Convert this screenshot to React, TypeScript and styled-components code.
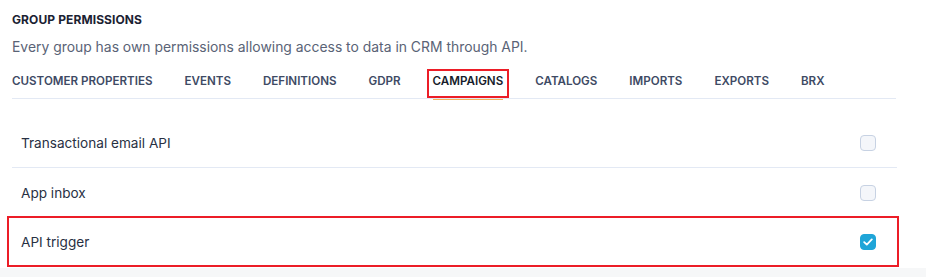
import React from 'react'
import styled, { createGlobalStyle } from 'styled-components'

const GlobalStyle = createGlobalStyle`
    html, body {
        margin: 0;
        padding: 0;
        background: #ffffff;
    }
    body {
        font-family: Inter, 'Noto Sans', sans-serif;
        -webkit-font-smoothing: antialiased;
    }
`

const Page = styled.div`
    width: 926px;
    height: 277px;
    overflow: hidden;
    display: flex;
    flex-direction: column;
    background: #ffffff;
`

const Content = styled.div`
    padding: 12px 30px 0 12px;
    display: flex;
    flex-direction: column;
`

const Title = styled.h4`
    margin: 0;
    font-size: 12px;
    line-height: 16px;
    font-weight: 700;
    color: #1b2232;
    letter-spacing: 0.1px;
`

const Description = styled.p`
    margin: 9px 0 0;
    font-size: 13.9px;
    line-height: 20px;
    color: #5a6376;
`

const TabBar = styled.div`
    display: flex;
    gap: 32px;
    margin-top: 6px;
    height: 35px;
    align-items: stretch;
    border-bottom: 1px solid #e3e9f4;
`

const Tab = styled.div<{ active?: boolean }>`
    position: relative;
    display: flex;
    align-items: center;
    padding-top: 1px;
    font-size: 11.6px;
    font-weight: 600;
    white-space: nowrap;
    color: ${({ active }) => (active ? '#161c2b' : '#3e4a64')};
    ${({ active }) =>
        active &&
        `
        &::after {
            content: '';
            position: absolute;
            left: 0;
            right: 0;
            bottom: -2px;
            height: 1.5px;
            background: #f4b35a;
        }
        &::before {
            content: '';
            position: absolute;
            left: -6px;
            right: -6px;
            top: 6px;
            bottom: 0;
            border: 2.5px solid #ec1d27;
            z-index: 1;
        }
    `}
`

const List = styled.div`
    margin: 19px 27px 0 7px;
    display: flex;
    flex-direction: column;
`

const Row = styled.div<{ highlighted?: boolean }>`
    display: flex;
    align-items: center;
    justify-content: space-between;
    padding: 0 21px 0 12px;
    font-size: 13.6px;
    color: #283043;
    box-sizing: border-box;
    border: 2.5px solid ${({ highlighted }) => (highlighted ? '#ec1d27' : 'transparent')};
    margin-top: ${({ highlighted }) => (highlighted ? '-1px' : '0')};
    height: ${({ highlighted }) => (highlighted ? '51px' : '49px')};
`

const Divider = styled.div`
    height: 1px;
    background: #e3e9f4;
    margin: 0 2px 0 5px;
`

const Checkbox = styled.span<{ checked?: boolean }>`
    width: 16px;
    height: 16px;
    box-sizing: border-box;
    border-radius: 4px;
    display: flex;
    align-items: center;
    justify-content: center;
    background: ${({ checked }) => (checked ? '#1fa5d8' : '#f4f6fa')};
    border: 1.5px solid ${({ checked }) => (checked ? '#1fa5d8' : '#c7d2e3')};
`

const BottomStrip = styled.div`
    flex: 1;
    margin-top: 1px;
    background: #f6f7f8;
`

const tabs = [
    'CUSTOMER PROPERTIES',
    'EVENTS',
    'DEFINITIONS',
    'GDPR',
    'CAMPAIGNS',
    'CATALOGS',
    'IMPORTS',
    'EXPORTS',
    'BRX',
]

function Check() {
    return (
        <svg width="10" height="8" viewBox="0 0 10 8" fill="none">
            <path
                d="M1.2 4.2 L3.8 6.6 L8.8 1.4"
                stroke="#ffffff"
                strokeWidth="1.8"
                strokeLinecap="round"
                strokeLinejoin="round"
            />
        </svg>
    )
}

export default function App() {
    return (
        <Page>
            <GlobalStyle />
            <Content>
                <Title>GROUP PERMISSIONS</Title>
                <Description>
                    Every group has own permissions allowing access to data in CRM through API.
                </Description>
                <TabBar>
                    {tabs.map((t) => (
                        <Tab key={t} active={t === 'CAMPAIGNS'}>
                            {t}
                        </Tab>
                    ))}
                </TabBar>
            </Content>
            <List>
                <Row>
                    <span>Transactional email API</span>
                    <Checkbox />
                </Row>
                <Divider />
                <Row>
                    <span>App inbox</span>
                    <Checkbox />
                </Row>
                <Row highlighted>
                    <span>API trigger</span>
                    <Checkbox checked>
                        <Check />
                    </Checkbox>
                </Row>
            </List>
            <BottomStrip />
        </Page>
    )
}
